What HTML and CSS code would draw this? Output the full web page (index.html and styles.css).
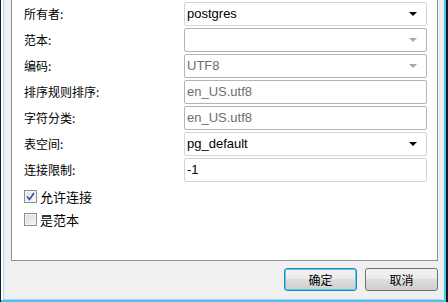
FILE: index.html
```html
<!DOCTYPE html>
<html lang="zh-CN">
<head>
  <meta charset="UTF-8">
  <title>数据库属性</title>
  <link rel="stylesheet" href="styles.css">
</head>
<body>
  <div class="frame">
    <div class="client">
      <!-- Properties panel -->
      <div class="panel">
        <div class="form-grid">
          <label class="field-label">所有者:</label>
          <div class="combo">
            <span class="combo-text">postgres</span>
            <span class="arrow"></span>
          </div>

          <label class="field-label">范本:</label>
          <div class="combo disabled">
            <span class="combo-text"></span>
            <span class="arrow"></span>
          </div>

          <label class="field-label">编码:</label>
          <div class="combo disabled">
            <span class="combo-text">UTF8</span>
            <span class="arrow"></span>
          </div>

          <label class="field-label">排序规则排序:</label>
          <div class="textbox disabled">en_US.utf8</div>

          <label class="field-label">字符分类:</label>
          <div class="textbox disabled">en_US.utf8</div>

          <label class="field-label">表空间:</label>
          <div class="combo">
            <span class="combo-text">pg_default</span>
            <span class="arrow"></span>
          </div>

          <label class="field-label">连接限制:</label>
          <div class="textbox">-1</div>
        </div>

        <div class="checks">
          <div class="check-row">
            <span class="checkbox checked">
              <svg width="9" height="9" viewBox="0 0 9 9"><path d="M1 4.5 L3.5 7.5 L8 1" fill="none" stroke="#2a4fa8" stroke-width="1.6"/></svg>
            </span>
            <span>允许连接</span>
          </div>
          <div class="check-row">
            <span class="checkbox"></span>
            <span>是范本</span>
          </div>
        </div>
      </div>

      <!-- Dialog buttons -->
      <div class="buttons">
        <button class="btn default">确定</button>
        <button class="btn">取消</button>
      </div>
    </div>
  </div>
</body>
</html>
```

FILE: styles.css
```css
:root {
  --face: #f0f0f0;
  --panel-border: #8f8f8f;
  --text: #000000;
  --disabled-text: #6d6d6d;
  --frame-blue: #4cc3ea;
}

html, body {
  margin: 0;
  height: 302px;
  overflow: hidden;
  background: var(--face);
}

body {
  font-family: "Noto Sans CJK SC", "Liberation Sans", sans-serif;
  font-size: 12px;
  color: var(--text);
}

.frame {
  box-sizing: border-box;
  width: 448px;
  height: 302px;
  border-left: 1px solid #1a1a1a;
  border-right: 2px solid #1a1a1a;
  background: var(--frame-blue);
  padding: 0 2px 2px 0;
}

.client {
  box-sizing: border-box;
  height: 300px;
  background: var(--face);
  border-left: 2px solid #ffffff;
  border-right: 2px solid #e8eef5;
  box-shadow: inset 1px 0 0 #a9d6f0, inset 0 -1px 0 #a9d6f0;
  padding-left: 8px;
  padding-right: 4px;
  display: flex;
  flex-direction: column;
}

.panel {
  box-sizing: border-box;
  height: 261px;
  background: #ffffff;
  border: 1px solid var(--panel-border);
  border-top: none;
  padding: 2px 8px 0 12px;
}

.form-grid {
  display: grid;
  grid-template-columns: 160px 243px;
  grid-auto-rows: 24px;
  row-gap: 2px;
  align-items: center;
}

.field-label {
  line-height: 24px;
}

.combo,
.textbox {
  box-sizing: border-box;
  height: 24px;
  border: 1px solid #d4d4d4;
  border-radius: 2px;
  background: #ffffff;
  font-family: "Liberation Sans", "DejaVu Sans", sans-serif;
  font-size: 13px;
  line-height: 22px;
  padding-left: 2px;
}

.combo {
  display: flex;
  align-items: center;
  justify-content: space-between;
}

.combo.disabled,
.textbox.disabled {
  border-color: #b4b4b4;
  color: var(--disabled-text);
}

.arrow {
  width: 0;
  height: 0;
  border-left: 4px solid transparent;
  border-right: 4px solid transparent;
  border-top: 4px solid #000000;
  margin-right: 9px;
}

.combo.disabled .arrow {
  border-top-color: #a8a8a8;
}

.checks {
  margin-top: 6px;
  display: flex;
  flex-direction: column;
  gap: 6px;
}

.check-row {
  display: flex;
  align-items: center;
  gap: 3px;
  height: 17px;
  font-size: 13px;
}

.checkbox {
  box-sizing: border-box;
  width: 13px;
  height: 13px;
  border: 1px solid #8e8f8f;
  background: linear-gradient(135deg, #dcdcdc, #f6f6f6);
  box-shadow: inset 0 0 0 1px #f4f4f4;
  display: flex;
  align-items: center;
  justify-content: center;
}

.checkbox.checked {
  background: linear-gradient(135deg, #e4e4e4, #fafafa);
}

.buttons {
  display: flex;
  justify-content: flex-end;
  gap: 8px;
  margin-top: 7px;
}

.btn {
  box-sizing: border-box;
  width: 73px;
  height: 23px;
  border: 1px solid #707070;
  border-radius: 3px;
  background: linear-gradient(#f2f2f2 0%, #ebebeb 45%, #dddddd 50%, #cfcfcf 100%);
  font-family: "Noto Sans CJK SC", sans-serif;
  font-size: 12px;
  color: #000000;
  padding: 0;
}

.btn.default {
  border-color: #3c7fb1;
  box-shadow: inset 0 0 0 1px #48d0f5;
}
```
